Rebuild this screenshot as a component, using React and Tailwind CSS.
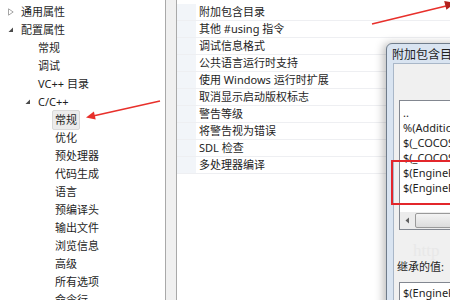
const font = "font-['Noto_Sans','Noto_Sans_CJK_SC',sans-serif]";

const tree = [
  { label: '通用属性', level: 0, arrow: 'closed' },
  { label: '配置属性', level: 0, arrow: 'open' },
  { label: '常规', level: 1 },
  { label: '调试', level: 1 },
  { label: 'VC++ 目录', level: 1 },
  { label: 'C/C++', level: 1, arrow: 'open' },
  { label: '常规', level: 2, selected: true },
  { label: '优化', level: 2 },
  { label: '预处理器', level: 2 },
  { label: '代码生成', level: 2 },
  { label: '语言', level: 2 },
  { label: '预编译头', level: 2 },
  { label: '输出文件', level: 2 },
  { label: '浏览信息', level: 2 },
  { label: '高级', level: 2 },
  { label: '所有选项', level: 2 },
  { label: '命令行', level: 2 },
];

const props = [
  '附加包含目录',
  '其他 #using 指令',
  '调试信息格式',
  '公共语言运行时支持',
  '使用 Windows 运行时扩展',
  '取消显示启动版权标志',
  '警告等级',
  '将警告视为错误',
  'SDL 检查',
  '多处理器编译',
];

const dirs = [
  '..',
  '%(AdditionalIncludeDirectories)',
  '$(_COCOS_HEADER_WIN32_BEGIN)',
  '$(_COCOS_HEADER_WIN32_END)',
  '$(EngineRoot)cocos\\audio\\include',
  '$(EngineRoot)external',
];

const indent = ['pl-[8px]', 'pl-[25px]', 'pl-[42px]'];

const Arrow = ({ type }) => {
  if (type === 'closed')
    return (
      <svg width="6" height="8" viewBox="0 0 6 8">
        <path d="M0.5 0.8 L5.2 4 L0.5 7.2 Z" fill="none" stroke="#a6a6a6" strokeWidth="1" />
      </svg>
    );
  if (type === 'open')
    return (
      <svg width="6" height="6" viewBox="0 0 6 6">
        <path d="M5 0.5 L5 5 L0.5 5 Z" fill="#4b4b4b" />
      </svg>
    );
  return null;
};

const TreeRow = ({ item }) => (
  <div className={`h-[18px] flex items-center ${indent[item.level]}`}>
    <span className="w-[13px] flex items-center">
      <Arrow type={item.arrow} />
    </span>
    {item.selected ? (
      <span className="-ml-[3px] px-[2px] h-[20px] leading-[18px] bg-[#ececec] border border-[#d9d9d9] rounded-[2px]">
        {item.label}
      </span>
    ) : (
      <span>{item.label}</span>
    )}
  </div>
);

export default function App() {
  return (
    <div className={`relative w-[450px] h-[300px] overflow-hidden bg-[#f0f0f0] flex text-[11px] text-[#1e1e1e] ${font}`}>
      {/* left tree */}
      <div className="w-[166px] shrink-0 bg-white border-r border-[#a9a9a9] pt-[3px]">
        {tree.map((item, i) => (
          <TreeRow key={i} item={item} />
        ))}
      </div>

      {/* property grid */}
      <div className="flex-1 ml-[10px] bg-white border-l border-[#a9a9a9] pt-[4px]">
        {props.map((p) => (
          <div key={p} className="h-[17px] flex border-b border-[#eeeff2]">
            <div className="w-[19px] bg-[#f2f5f9]" />
            <div className="pl-[3px] leading-[16px] whitespace-nowrap">{p}</div>
          </div>
        ))}
      </div>

      {/* dialog window */}
      <div className="absolute left-[386px] top-[43px] w-[100px] h-[300px] rounded-tl-[6px] border border-[#6f7c8b] bg-[#d9e4f1] shadow-[-3px_0_8px_rgba(0,0,0,0.25)] flex flex-col">
        <div className="shrink-0 h-[19px] pl-[5px] text-[12px] leading-[21px] whitespace-nowrap">附加包含目录</div>
        <div className="flex-1 ml-[6px] border border-[#a9b7c8] bg-[#f0f0f0] pt-[36px] pl-[5px]">
          <div className="h-[130px] bg-white border border-[#828790] flex flex-col">
            <div className="flex-1 pt-[4px] pl-[3px] leading-[15px] whitespace-nowrap overflow-hidden">
              {dirs.map((d, i) => (
                <div key={i}>{d}</div>
              ))}
            </div>
            <div className="shrink-0 h-[17px] bg-[#ececec] flex items-center pl-[5px]">
              <svg width="5" height="7" viewBox="0 0 5 7">
                <path d="M4 0.5 L0.5 3.5 L4 6.5 Z" fill="#606060" />
              </svg>
              <div className="ml-[5px] h-[15px] flex-1 rounded-[2px] border border-[#9a9a9a] bg-gradient-to-b from-[#f4f4f4] to-[#dcdcdc]" />
            </div>
          </div>
          <div className="h-[16px] mt-[13px] ml-[14px] text-[17px] leading-[16px] text-[#e8e8e8] font-['Liberation_Serif',serif]">
            http
          </div>
          <div className="-ml-[2px] leading-[16px] whitespace-nowrap">继承的值:</div>
          <div className="mt-[7px] h-[40px] bg-white border border-[#828790] pt-[2px] pl-[3px] leading-[15px] whitespace-nowrap overflow-hidden">
            $(EngineRoot)cocos\audio\include
          </div>
        </div>
      </div>

      {/* highlight box */}
      <div className="absolute left-[391px] top-[160px] w-[80px] h-[45px] border-2 border-[#e3262b]" />

      {/* red arrows */}
      <svg className="absolute inset-0 pointer-events-none" width="450" height="300" viewBox="0 0 450 300">
        <line x1="160" y1="101" x2="93" y2="116" stroke="#e8302b" strokeWidth="1.6" />
        <polygon points="86,117.5 95.7,119.4 93.9,111.6" fill="#e8302b" />
        <line x1="372" y1="24" x2="446" y2="6" stroke="#e8302b" strokeWidth="1.6" />
        <polygon points="455,3 446.4,9.8 444.2,1.1" fill="#b3201c" />
      </svg>
    </div>
  );
}
